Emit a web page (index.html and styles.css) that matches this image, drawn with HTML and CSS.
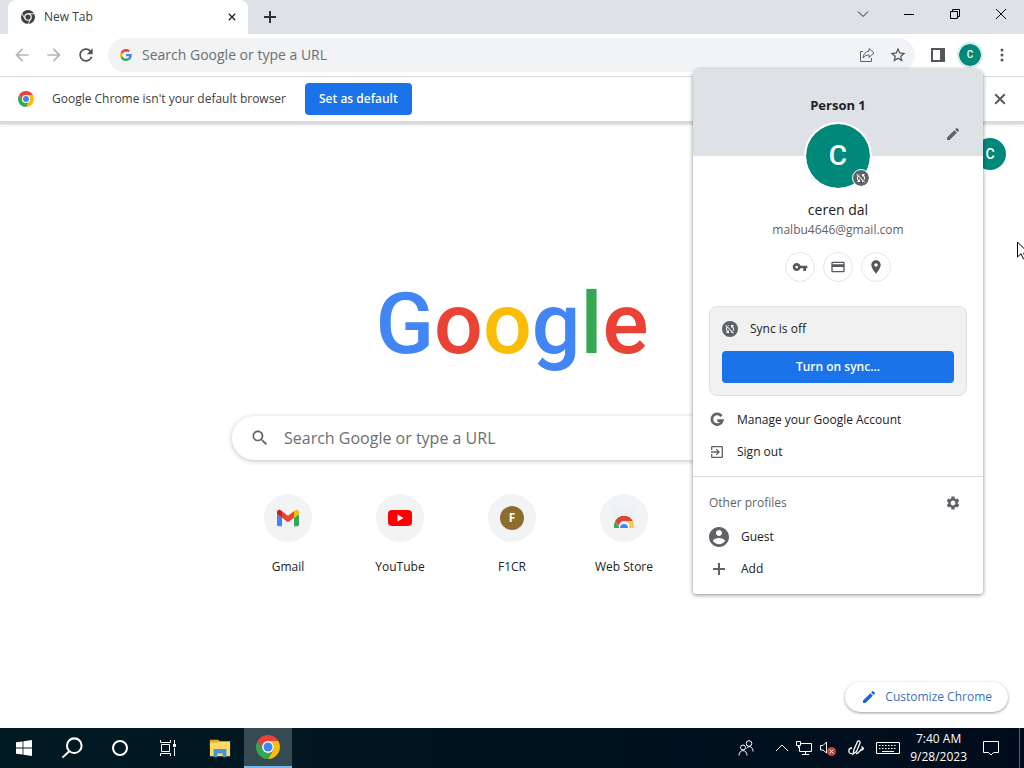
FILE: index.html
```html
<!DOCTYPE html>
<html lang="en">
<head>
<meta charset="utf-8">
<meta name="viewport" content="width=device-width, initial-scale=1">
<title>New Tab</title>
<link rel="stylesheet" href="styles.css">
</head>
<body>
<svg class="defs" aria-hidden="true">
  <symbol id="chrome" viewBox="0 0 48 48">
    <path fill="#ea4335" d="M24 12H44.78A24 24 0 0 0 3.22 12L13.61 30A12 12 0 0 1 24 12z"/>
    <path fill="#fbbc04" d="M44.78 12H24A12 12 0 0 1 34.39 30L24 48A24 24 0 0 0 44.78 12z"/>
    <path fill="#34a853" d="M24 48L34.39 30A12 12 0 0 1 13.61 30L3.22 12A24 24 0 0 0 24 48z"/>
    <circle cx="24" cy="24" r="12" fill="#fff"/><circle cx="24" cy="24" r="9" fill="#4285f4"/>
  </symbol>
  <symbol id="chrome-mono" viewBox="0 0 48 48">
    <circle cx="24" cy="24" r="24" fill="#3c4043"/>
    <circle cx="24" cy="24" r="11" fill="none" stroke="#fff" stroke-width="4"/>
    <path d="M24 13H45M13.6 30L3 12M34.4 30L24 48" stroke="#fff" stroke-width="3"/>
  </symbol>
  <symbol id="sync-off" viewBox="0 0 24 24"><path d="M10 6.35V4.26c-.8.21-1.55.54-2.23.96l1.46 1.46c.25-.12.5-.24.77-.33zm-7.14-.94l2.36 2.36C4.45 8.99 4 10.44 4 12c0 2.21.91 4.2 2.36 5.64L4 20h6v-6l-2.24 2.24C6.68 15.15 6 13.66 6 12c0-1 .25-1.94.68-2.77l8.08 8.08c-.25.13-.5.25-.77.34v2.09c.8-.21 1.55-.54 2.23-.96l2.36 2.36 1.27-1.27L4.14 4.14 2.86 5.41zM20 4h-6v6l2.24-2.24C17.32 8.85 18 10.34 18 12c0 1-.25 1.94-.68 2.77l1.46 1.46C19.55 15.01 20 13.56 20 12c0-2.21-.91-4.2-2.36-5.64L20 4z"/></symbol>
  <symbol id="edit" viewBox="0 0 24 24"><path d="M3 17.25V21h3.75L17.81 9.94l-3.75-3.75L3 17.25zM20.71 7.04c.39-.39.39-1.02 0-1.41l-2.34-2.34c-.39-.39-1.02-.39-1.41 0l-1.83 1.83 3.75 3.75 1.83-1.83z"/></symbol>
  <symbol id="close" viewBox="0 0 10 10"><path d="M1 1L9 9M9 1L1 9" fill="none" stroke="currentColor" stroke-width="1.6"/></symbol>
</svg>

<header class="tab-strip">
  <div class="tab">
    <svg class="i14"><use href="#chrome-mono"/></svg>
    <span class="tab-title">New Tab</span>
    <button class="bare" aria-label="Close tab"><svg class="i8"><use href="#close"/></svg></button>
  </div>
  <button class="bare new-tab" aria-label="New tab"><svg class="i12" viewBox="0 0 12 12"><path d="M6 0V12M0 6H12" stroke="#303134" stroke-width="2"/></svg></button>
  <div class="window-controls">
    <button class="bare" aria-label="Search tabs"><svg class="i12" viewBox="0 0 12 12"><path d="M1 3.5L6 8.5L11 3.5" fill="none" stroke="#222"/></svg></button>
    <button class="bare" aria-label="Minimize"><svg class="i12" viewBox="0 0 12 12"><path d="M1 6.5H11" stroke="#000"/></svg></button>
    <button class="bare" aria-label="Restore"><svg class="i12" viewBox="0 0 12 12"><path d="M1.5 3.5H8.5V10.5H1.5zM3.5 3.5V1.5H10.5V8.5H8.5" fill="none" stroke="#000"/></svg></button>
    <button class="bare" aria-label="Close window"><svg class="i12" viewBox="0 0 12 12"><path d="M1 1L11 11M11 1L1 11" stroke="#000"/></svg></button>
  </div>
</header>

<nav class="toolbar">
  <div class="nav-buttons">
    <button class="bare" aria-label="Back"><svg class="i20" viewBox="0 0 24 24" fill="#b4b6b9"><path d="M20 11H7.83l5.59-5.59L12 4l-8 8 8 8 1.41-1.41L7.83 13H20v-2z"/></svg></button>
    <button class="bare" aria-label="Forward"><svg class="i20" viewBox="0 0 24 24" fill="#b4b6b9"><path d="M12 4l-1.41 1.41L16.17 11H4v2h12.17l-5.58 5.59L12 20l8-8z"/></svg></button>
    <button class="bare" aria-label="Reload"><svg class="i20" viewBox="0 0 24 24" fill="#4d5155"><path d="M17.65 6.35C16.2 4.9 14.21 4 12 4c-4.42 0-7.99 3.58-7.99 8s3.57 8 7.99 8c3.73 0 6.84-2.55 7.73-6h-2.08c-.82 2.33-3.04 4-5.65 4-3.31 0-6-2.69-6-6s2.69-6 6-6c1.66 0 3.14.69 4.22 1.78L13 11h7V4l-2.35 2.35z"/></svg></button>
  </div>
  <div class="omnibox">
    <svg class="i12" viewBox="0 0 48 48"><path fill="#EA4335" d="M24 9.5c3.54 0 6.71 1.22 9.21 3.6l6.85-6.85C35.9 2.38 30.47 0 24 0 14.62 0 6.51 5.38 2.56 13.22l7.98 6.19C12.43 13.72 17.74 9.5 24 9.5z"/><path fill="#4285F4" d="M46.98 24.55c0-1.57-.15-3.09-.38-4.55H24v9.02h12.94c-.58 2.96-2.26 5.48-4.78 7.18l7.73 6c4.51-4.18 7.09-10.36 7.09-17.65z"/><path fill="#FBBC05" d="M10.53 28.59c-.48-1.45-.76-2.99-.76-4.59s.27-3.14.76-4.59l-7.98-6.19C.92 16.46 0 20.12 0 24c0 3.88.92 7.54 2.56 10.78l7.97-6.19z"/><path fill="#34A853" d="M24 48c6.48 0 11.93-2.13 15.89-5.81l-7.73-6c-2.15 1.45-4.92 2.3-8.16 2.3-6.26 0-11.57-4.22-13.47-9.91l-7.98 6.19C6.51 42.62 14.62 48 24 48z"/></svg>
    <input class="omnibox-input" type="text" aria-label="Address and search bar" placeholder="Search Google or type a URL">
    <button class="bare" aria-label="Share"><svg class="i16" viewBox="0 0 16 16" fill="none" stroke="#5f6368"><path d="M4 4.5H1.500V14.500H12.500V11M10 1.500L15 6L10 10.500V8C7 8 5 9 4 11C4.300 7 6.500 4.500 10 4.200z"/></svg></button>
    <button class="bare" aria-label="Bookmark this tab"><svg class="i18" viewBox="0 0 24 24" fill="#4d5155"><path d="M22 9.24l-7.19-.62L12 2 9.190 8.630 2 9.240l5.460 4.730L5.820 21 12 17.270 18.180 21l-1.630-7.030L22 9.240zM12 15.400l-3.760 2.270 1-4.280-3.320-2.880 4.380-.38L12 6.100l1.710 4.040 4.380.38-3.320 2.880 1 4.280L12 15.400z"/></svg></button>
  </div>
  <div class="tools">
    <button class="bare" aria-label="Side panel"><svg class="i14" viewBox="0 0 14 14" fill="#54585c"><path d="M0 0H14V14H0zM2 2V12H9V2z" fill-rule="evenodd"/></svg></button>
    <button class="avatar avatar-small" aria-label="Profile">C</button>
    <button class="bare" aria-label="Menu"><svg class="i14" viewBox="0 0 14 14" fill="#54585c"><circle cx="7" cy="2" r="1.500"/><circle cx="7" cy="7" r="1.500"/><circle cx="7" cy="12" r="1.500"/></svg></button>
  </div>
</nav>

<div class="infobar">
  <svg class="i16"><use href="#chrome"/></svg>
  <span class="infobar-text">Google Chrome isn't your default browser</span>
  <button class="primary infobar-action">Set as default</button>
  <button class="bare infobar-close" aria-label="Dismiss"><svg class="i12"><use href="#close"/></svg></button>
</div>

<main class="page">
  <button class="avatar page-avatar" aria-label="Google Account">C</button>
  <h1 class="wordmark"><span class="blue">G</span><span class="red">o</span><span class="yellow">o</span><span class="blue">g</span><span class="green">l</span><span class="red">e</span></h1>
  <form class="search">
    <svg class="i20" viewBox="0 0 24 24" fill="#5f6368"><path d="M15.500 14h-.79l-.28-.27C15.410 12.590 16 11.110 16 9.500 16 5.910 13.090 3 9.500 3S3 5.910 3 9.500 5.910 16 9.500 16c1.610 0 3.090-.59 4.230-1.570l.27.28v.79l5 4.990L20.490 19l-4.990-5zm-6 0C7.010 14 5 11.990 5 9.500S7.010 5 9.500 5 14 7.010 14 9.500 11.990 14 9.500 14z"/></svg>
    <input class="search-input" type="text" aria-label="Search" placeholder="Search Google or type a URL">
  </form>
  <div class="shortcuts">
    <a class="shortcut" href="#"><span class="disc"><svg class="i22" viewBox="52 42 88 66"><path fill="#4285f4" d="M58 108h14V74L52 59v43c0 3.320 2.690 6 6 6"/><path fill="#34a853" d="M120 108h14c3.320 0 6-2.690 6-6V59l-20 15"/><path fill="#fbbc04" d="M120 48v26l20-15v-8c0-7.420-8.470-11.650-14.400-7.200"/><path fill="#ea4335" d="M72 74V48l24 18 24-18v26L96 92"/><path fill="#c5221f" d="M52 51v8l20 15V48l-5.600-4.200c-5.940-4.450-14.400-.22-14.400 7.200"/></svg></span>Gmail</a>
    <a class="shortcut" href="#"><span class="disc"><svg class="i24" viewBox="0 0 24 24"><rect y="4" width="24" height="16" rx="4" fill="#f00"/><path d="M9.500 8.500V15.500L15.500 12z" fill="#fff"/></svg></span>YouTube</a>
    <a class="shortcut" href="#"><span class="disc"><span class="letter-icon">F</span></span>F1CR</a>
    <a class="shortcut" href="#"><span class="disc"><svg class="i24" viewBox="0 0 24 24"><path fill="#ebf0f1" d="M2 2H22V12H2z"/><svg x="2" y="10" width="20" height="12" viewBox="0 0 20 12"><path fill="#34a853" d="M0 12A10 10 0 0 1 1.500 5L5.500 12z"/><path fill="#db4437" d="M1.200 5A10 10 0 0 1 18.800 5H10A5 5 0 0 0 5 10z"/><path fill="#fbc93d" d="M10 5H18.800A10 10 0 0 1 20 12H15A5 5 0 0 0 10 5z"/><path fill="#fff" d="M5 12A5 5 0 0 1 15 12z"/><path fill="#4285f4" d="M6 12A4 4 0 0 1 14 12z"/></svg></svg></span>Web Store</a>
  </div>
  <button class="customize"><svg class="i16" fill="#1967d2"><use href="#edit"/></svg>Customize Chrome</button>
</main>

<section class="profile-menu" aria-label="Profile">
  <div class="profile-top">
    <h2 class="profile-title">Person 1</h2>
    <button class="bare profile-edit" aria-label="Customize profile"><svg class="i16" fill="#5f6368"><use href="#edit"/></svg></button>
  </div>
  <div class="avatar avatar-large">C<span class="badge sync-badge"><svg class="i12"><use href="#sync-off"/></svg></span></div>
  <p class="name">ceren dal</p>
  <p class="email">malbu4646@gmail.com</p>
  <div class="quick-links">
    <button class="round" aria-label="Passwords"><svg class="i16" viewBox="0 0 24 24"><path fill-rule="evenodd" d="M12.650 10C11.830 7.670 9.610 6 7 6c-3.310 0-6 2.690-6 6s2.690 6 6 6c2.610 0 4.830-1.670 5.650-4H17v4h4v-4h2v-4H12.650zM7 14c-1.100 0-2-.9-2-2s.9-2 2-2 2 .9 2 2-.9 2-2 2z"/></svg></button>
    <button class="round" aria-label="Payment methods"><svg class="i16" viewBox="0 0 24 24"><path d="M20 4H4c-1.110 0-1.990.89-1.990 2L2 18c0 1.110.89 2 2 2h16c1.110 0 2-.89 2-2V6c0-1.110-.89-2-2-2zm0 14H4v-6h16v6zm0-10H4V6h16v2z"/></svg></button>
    <button class="round" aria-label="Addresses"><svg class="i16" viewBox="0 0 24 24"><path d="M12 2C8.130 2 5 5.130 5 9c0 5.250 7 13 7 13s7-7.750 7-13c0-3.870-3.130-7-7-7zm0 9.500c-1.380 0-2.500-1.120-2.500-2.500s1.120-2.500 2.500-2.500 2.500 1.120 2.500 2.500-1.120 2.500-2.500 2.500z"/></svg></button>
  </div>
  <div class="sync-card">
    <div class="sync-status"><span class="badge"><svg class="i12"><use href="#sync-off"/></svg></span>Sync is off</div>
    <button class="primary">Turn on sync...</button>
  </div>
  <a class="menu-row" href="#"><svg class="i16" viewBox="0 0 24 24" fill="none" stroke="#5f6368" stroke-width="4"><path d="M18.800 6.200A8 8 0 1 0 20 13H12.500"/></svg>Manage your Google Account</a>
  <a class="menu-row" href="#"><svg class="i16" viewBox="0 0 24 24" fill="#5f6368"><path d="M10.090 15.590L11.500 17l5-5-5-5-1.410 1.410L12.670 11H3v2h9.670l-2.580 2.590zM19 3H5c-1.110 0-2 .9-2 2v4h2V5h14v14H5v-4H3v4c0 1.100.89 2 2 2h14c1.100 0 2-.9 2-2V5c0-1.100-.9-2-2-2z"/></svg>Sign out</a>
  <div class="others-head">
    <span>Other profiles</span>
    <button class="bare" aria-label="Manage profiles"><svg class="i16" viewBox="0 0 24 24" fill="#5f6368"><path d="M19.140 12.940c.04-.3.06-.61.06-.94 0-.32-.02-.64-.07-.94l2.030-1.580c.18-.14.23-.41.12-.61l-1.920-3.320c-.12-.22-.37-.29-.59-.22l-2.390.96c-.5-.38-1.030-.7-1.620-.94l-.36-2.540c-.04-.24-.24-.41-.48-.41h-3.840c-.24 0-.43.17-.47.41l-.36 2.540c-.59.24-1.130.57-1.620.94l-2.390-.96c-.22-.08-.47 0-.59.22L2.740 8.870c-.12.21-.08.47.12.61l2.030 1.580c-.05.3-.09.63-.09.94s.02.64.07.94l-2.030 1.580c-.18.14-.23.41-.12.61l1.920 3.320c.12.22.37.29.59.22l2.390-.96c.5.38 1.030.7 1.620.94l.36 2.540c.05.24.24.41.48.41h3.840c.24 0 .44-.17.47-.41l.36-2.540c.59-.24 1.130-.56 1.620-.94l2.390.96c.22.08.47 0 .59-.22l1.920-3.320c.12-.22.07-.47-.12-.61l-2.010-1.580zM12 15.600c-1.980 0-3.600-1.620-3.600-3.600s1.620-3.600 3.600-3.600 3.600 1.620 3.600 3.600-1.620 3.600-3.600 3.600z"/></svg></button>
  </div>
  <a class="menu-row profile-row" href="#"><svg class="i24" viewBox="0 0 24 24" fill="#5f6368"><path d="M12 2C6.480 2 2 6.480 2 12s4.480 10 10 10 10-4.480 10-10S17.520 2 12 2zm0 3c1.660 0 3 1.340 3 3s-1.340 3-3 3-3-1.340-3-3 1.340-3 3-3zm0 14.200c-2.500 0-4.710-1.280-6-3.220.03-1.990 4-3.080 6-3.080 1.990 0 5.970 1.090 6 3.080-1.290 1.940-3.500 3.220-6 3.220z"/></svg>Guest</a>
  <a class="menu-row profile-row" href="#"><svg class="i24" viewBox="0 0 24 24"><path d="M12 6V18M6 12H18" stroke="#5f6368" stroke-width="2"/></svg>Add</a>
</section>

<footer class="taskbar">
  <div class="apps">
    <button class="task" aria-label="Start"><svg class="i16" viewBox="0 0 16 16" fill="#fff"><path d="M0 2.300L6.600 1.400V7.600H0zM7.400 1.300L16 0V7.600H7.400zM0 8.400H6.600V14.600L0 13.700zM7.400 8.400H16V16L7.400 14.700z"/></svg></button>
    <button class="task" aria-label="Search"><svg class="i22" viewBox="0 0 24 24" fill="none" stroke="#fff" stroke-width="2.200"><circle cx="14.500" cy="9.500" r="8"/><path d="M9 15.500L1.500 22.500"/></svg></button>
    <button class="task" aria-label="Cortana"><svg class="i16" viewBox="0 0 16 16" fill="none" stroke="#fff" stroke-width="2"><circle cx="8" cy="8" r="7"/></svg></button>
    <button class="task" aria-label="Task View"><svg class="i16" viewBox="0 0 16 16" fill="none" stroke="#fff"><path d="M.5 0V2.500H10.500V0M.5 16V13.500H10.500V16M1.500 4.500H9.500V11.500H1.500zM14.500 0V4M14.500 8V16"/><path d="M13 4H16V7H13z" fill="#fff" stroke="none"/></svg></button>
    <button class="task task-pinned" aria-label="File Explorer"><svg class="i22" viewBox="0 0 24 24"><path fill="#e9a928" d="M1 3H10L12 5H23V10H1z"/><path fill="#ffd966" d="M1 6H9L11 5H23V21H1z"/><path fill="#4596d8" d="M5 13H19V22H15V18H9V22H5z"/></svg></button>
    <button class="task task-active" aria-label="Google Chrome"><svg class="i24"><use href="#chrome"/></svg></button>
  </div>
  <div class="tray">
    <button class="bare people" aria-label="People"><svg class="i16" viewBox="0 0 16 16" fill="none" stroke="#fff"><circle cx="5" cy="7.500" r="2.500"/><path d="M1 15.500C1 9 9 9 9 15.500"/><circle cx="11" cy="3.500" r="2.800"/><path d="M8.500 8.500C10 5.500 15 6 15 11.500"/></svg></button>
    <button class="bare" aria-label="Hidden icons"><svg class="i12" viewBox="0 0 12 12"><path d="M0 9L6 3L12 9" fill="none" stroke="#fff"/></svg></button>
    <button class="bare" aria-label="Network"><svg class="i16" viewBox="0 0 16 16" fill="none" stroke="#fff"><path d="M5 3.500H15.500V11.500H3.500V6.500M9.500 12V14M6 14.500H13M.5 1.500H4.500V5.500H.5zM2.500 6V8"/></svg></button>
    <button class="bare" aria-label="Volume muted"><svg class="i16" viewBox="0 0 16 16" fill="none"><path d="M.5 5.500H3L6.500 2V13L3 10H.5z" stroke="#fff"/><circle cx="11.500" cy="11.500" r="4.500" fill="#e0342f"/><path d="M9.500 9.500L13.500 13.500M13.500 9.500L9.500 13.500" stroke="#fff"/></svg></button>
    <button class="bare ink" aria-label="Windows Ink"><svg class="i16" viewBox="0 0 16 16" fill="none" stroke="#fff" stroke-width="1.300"><path d="M5 14L6 9.500L9.500 1.500C10.500 .2 12.500 1 12 3L8.500 11.500zM4 8C0 8-.5 14 4 13.500M8 13.500C12 14 11 9 15.500 8.500M13.500 6.500L15.500 8.500L13.500 10.500"/></svg></button>
    <button class="bare" aria-label="Touch keyboard"><svg class="i24" viewBox="0 0 24 14" fill="none" stroke="#fff"><path d="M.5 1.500H23.500V12.500H.5z"/><path d="M3 4.500H21M3 7.500H21" stroke-dasharray="1.500 1.500"/><path d="M6 10.500H18"/></svg></button>
    <div class="clock"><time>7:40 AM</time><span>9/28/2023</span></div>
    <button class="bare" aria-label="Notifications"><svg class="i16" viewBox="0 0 16 16" fill="none" stroke="#fff"><path d="M.5 1.500H15.500V12.500H10.500L8 15L5.500 12.500H.5z"/></svg></button>
  </div>
</footer>
<svg class="cursor" viewBox="0 0 12 19" aria-hidden="true"><path d="M.5 1V16L4 12.700L6.500 18L9 17L6.600 12H11.500z" fill="#fff" stroke="#000"/></svg>
</body>
</html>
```
FILE: styles.css
```css
* { box-sizing: border-box; }
body {
  margin: 0;
  min-height: 100vh;
  position: relative;
  overflow: hidden;
  display: flex;
  flex-direction: column;
  background: #fff;
  color: #202124;
  font: 12px/16px "Open Sans", "Noto Sans", sans-serif;
}
h1, h2, p { margin: 0; }
a { color: inherit; text-decoration: none; }
button, input { font: inherit; color: inherit; }
svg { flex: none; display: block; }
.defs { position: absolute; width: 0; height: 0; }
.i8 { width: 8px; height: 8px; }
.i12 { width: 12px; height: 12px; }
.i14 { width: 14px; height: 14px; }
.i16 { width: 16px; height: 16px; }
.i18 { width: 18px; height: 18px; }
.i20 { width: 20px; height: 20px; }
.i22 { width: 22px; height: 22px; }
.i24 { width: 24px; height: 24px; }
.bare { border: 0; padding: 0; background: none; display: flex; align-items: center; justify-content: center; }

/* Tab strip */
.tab-strip { display: flex; background: #dee1e6; height: 34px; padding-left: 8px; }
.tab {
  display: flex;
  align-items: center;
  gap: 9px;
  width: 240px;
  padding: 0 12px 0 13px;
  background: #fff;
  border-radius: 8px 8px 0 0;
}
.tab-title { flex: 1; color: #3c4043; }
.new-tab { width: 44px; }
.window-controls { display: flex; margin-left: auto; padding-bottom: 6px; }
.window-controls .bare { width: 46px; }

/* Toolbar */
.toolbar { display: flex; align-items: center; height: 43px; padding: 0 12px; border-bottom: 1px solid #dadce0; }
.nav-buttons { display: flex; gap: 12px; margin-right: 12px; }
.omnibox {
  flex: 1;
  display: flex;
  align-items: center;
  height: 34px;
  padding: 0 8px 0 12px;
  gap: 14px;
  border-radius: 17px;
  background: #f1f3f4;
}
.omnibox-input { flex: 1; min-width: 0; padding: 0; margin-left: -4px; border: 0; background: none; font-size: 14px; line-height: 20px; }
.omnibox-input::placeholder, .search-input::placeholder { color: #6b6f73; opacity: 1; }
.tools { display: flex; align-items: center; gap: 14px; padding-left: 16px; margin-right: 3px; }
.avatar {
  display: flex;
  align-items: center;
  justify-content: center;
  padding: 0;
  border: 0;
  border-radius: 50%;
  background: #00897b;
  color: #fff;
  font-family: Roboto, sans-serif;
  font-weight: 500;
}
.avatar-small { width: 22px; height: 22px; font-size: 10px; outline: 2px solid #d6e9ec; }

/* Default browser prompt */
.infobar { display: flex; align-items: center; height: 47px; padding: 0 18px; border-bottom: 3px solid #d9dadb; box-shadow: 0 1px 2px #0002; }
.infobar-text { margin: 0 19px 0 18px; color: #3c4043; }
.primary { height: 32px; padding: 0 14px; border: 0; border-radius: 4px; background: #1a73e8; color: #fff; font-weight: 600; }
.infobar-close { margin-left: auto; color: #54585c; }

/* New tab page */
.page { position: relative; flex: 1; display: flex; flex-direction: column; align-items: center; padding: 144px 16px 0; }
.page-avatar { position: absolute; top: 14px; right: 18px; width: 32px; height: 32px; font-size: 14px; }
.wordmark { font: 500 86px/112px Roboto, sans-serif; }
.blue { color: #4285f4; }
.red { color: #ea4335; }
.yellow { color: #fbbc05; }
.green { color: #34a853; }
.search {
  display: flex;
  align-items: center;
  gap: 14px;
  width: 100%;
  max-width: 560px;
  height: 44px;
  margin-top: 36px;
  padding: 0 18px;
  border-radius: 22px;
  box-shadow: 0 1px 5px #20212447;
}
.search-input { flex: 1; padding: 0; border: 0; background: none; font-size: 16px; line-height: 24px; }
.shortcuts { display: grid; grid-template-columns: repeat(5, 112px); margin-top: 34px; }
.shortcut { display: flex; flex-direction: column; align-items: center; gap: 17px; }
.disc { display: flex; align-items: center; justify-content: center; width: 48px; height: 48px; border-radius: 50%; background: #f1f3f4; }
.letter-icon { width: 24px; border-radius: 50%; background: #8c6d2d; color: #fff; font-weight: 700; line-height: 24px; text-align: center; }
.customize {
  position: absolute;
  right: 16px;
  bottom: 16px;
  display: flex;
  align-items: center;
  gap: 8px;
  height: 30px;
  padding: 0 16px;
  border: 0;
  border-radius: 15px;
  background: #fff;
  color: #3b6fc4;
  box-shadow: 0 1px 3px #0006;
}

/* Profile menu */
.profile-menu {
  position: absolute;
  top: 69px;
  right: 41px;
  width: 290px;
  padding-bottom: 9px;
  border-radius: 8px 8px 3px 3px;
  background: #fff;
  box-shadow: 0 1px 4px #0007;
  overflow: hidden;
}
.profile-top { position: relative; height: 87px; padding-top: 26px; background: #dee1e6; }
.profile-title { font-size: 13px; line-height: 20px; text-align: center; }
.profile-edit { position: absolute; right: 22px; bottom: 14px; }
.avatar-large { position: relative; width: 64px; height: 64px; margin: -32px auto 0; font-size: 28px; outline: 2px solid #fff; }
.badge { display: flex; align-items: center; justify-content: center; width: 16px; height: 16px; border-radius: 50%; background: #5f6368; fill: #fff; }
.sync-badge { position: absolute; right: 1px; bottom: 2px; outline: 1px solid #fff; }
.name { margin-top: 12px; font-size: 14px; line-height: 20px; text-align: center; }
.email { margin-top: 2px; color: #5f6368; text-align: center; }
.quick-links { display: flex; justify-content: center; gap: 8px; margin-top: 14px; }
.round { display: flex; align-items: center; justify-content: center; width: 30px; height: 30px; padding: 0; border: 1px solid #e4e5e8; border-radius: 50%; background: #fff; fill: #54585c; }
.sync-card { margin: 24px 16px 8px; padding: 12px; border: 1px solid #dfe0e2; border-radius: 8px; background: #f1f1f1; }
.sync-status { display: flex; align-items: center; gap: 12px; height: 20px; margin-bottom: 12px; }
.sync-card .primary { width: 100%; }
.menu-row { display: flex; align-items: center; gap: 12px; height: 32px; padding: 0 16px; }
.others-head { display: flex; align-items: center; justify-content: space-between; margin-top: 8px; padding: 18px 22px 10px 16px; border-top: 1px solid #dadce0; color: #5f6368; }
.profile-row { gap: 10px; padding: 0 14px; }

/* Taskbar */
.taskbar { display: flex; justify-content: space-between; height: 40px; background: linear-gradient(90deg, #001a22, #000c1c); color: #fff; }
.apps { display: flex; }
.task { display: flex; align-items: center; justify-content: center; width: 48px; padding: 0; border: 0; background: none; }
.task-pinned { margin-left: 4px; }
.task-active { background: #364a52; border-bottom: 2px solid #76b9ed; }
.tray { display: flex; align-items: center; gap: 8px; margin-right: 4px; padding-right: 20px; border-right: 1px solid #56606c; }
.people { margin-right: 14px; }
.ink { margin: 0 4px; }
.clock { display: flex; flex-direction: column; align-items: center; line-height: 18px; margin: 0 8px 0 2px; }
.cursor { position: absolute; right: -5px; top: 241px; width: 12px; height: 19px; }
```
